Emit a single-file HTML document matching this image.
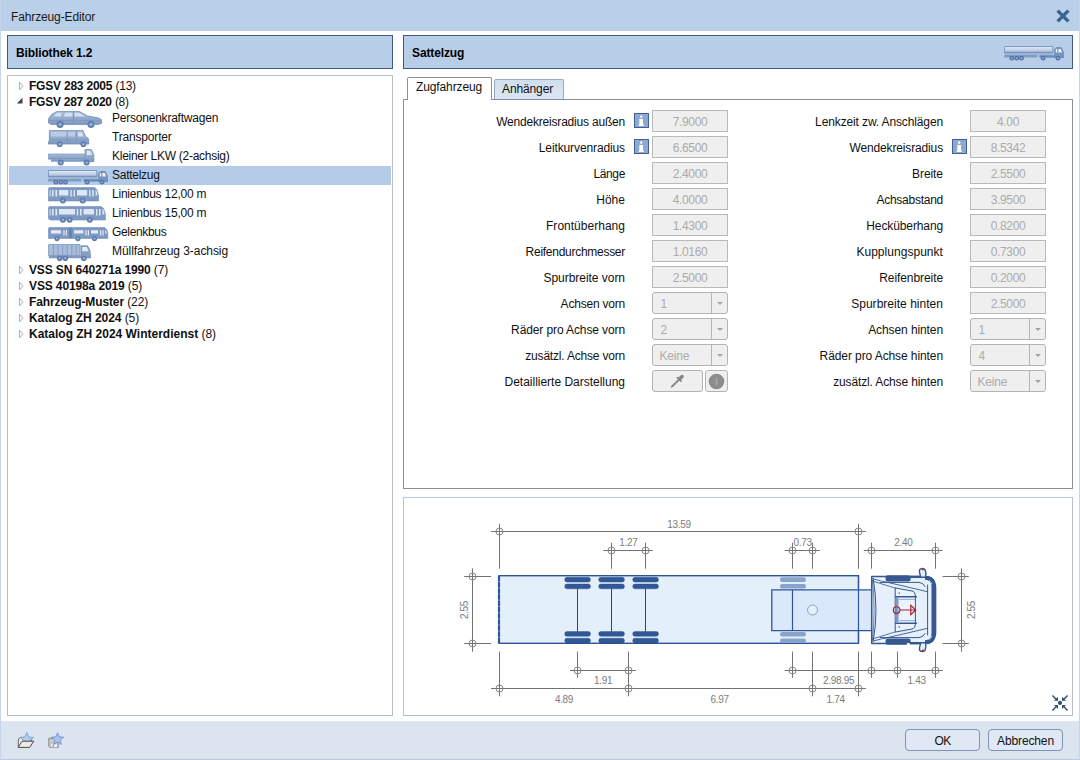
<!DOCTYPE html>
<html>
<head>
<meta charset="utf-8">
<title>Fahrzeug-Editor</title>
<style>
*{box-sizing:border-box;margin:0;padding:0}
html,body{width:1080px;height:760px;overflow:hidden;background:#fff}
body{font-family:"Liberation Sans",sans-serif;font-size:12px;color:#111;position:relative}
.abs{position:absolute}
#win{position:absolute;left:0;top:0;width:1080px;height:760px;border-left:1px solid #c6d5e9;border-right:1px solid #c6d5e9;border-bottom:1px solid #b7c9e3}
#title{position:absolute;left:0;top:0;width:1080px;height:31px;background:#bad0e9}
#title span{position:absolute;left:11px;top:9px;line-height:16px;font-size:12px;color:#1a1a1a;letter-spacing:-0.13px}
.hdr{position:absolute;top:35px;height:34px;background:#b8cee8;border:1px solid #3f5a8a}
.hdr b{position:absolute;left:8px;top:9px;line-height:16px;font-size:12px;font-weight:bold;color:#000;letter-spacing:-0.12px}
#tree{position:absolute;left:7px;top:75px;width:386px;height:641px;border:1px solid #b9bec6;border-top-color:#b4c8e6;border-bottom-color:#a9c0e2;background:#fff}
.t1{position:absolute;left:21px;height:16px;line-height:16px;white-space:nowrap;font-size:12px}
.t1 b{font-weight:bold}
.t2{position:absolute;left:104px;height:19px;line-height:19px;white-space:nowrap;font-size:12px}
#sel{position:absolute;left:1px;top:90px;width:382px;height:19px;background:#b5cce8}
#tabpanel{position:absolute;left:403px;top:99px;width:670px;height:390px;border:1px solid #8b8e96;background:#fff}
.tab{position:absolute;font-size:12px;line-height:16px;white-space:nowrap;letter-spacing:-0.12px}
#tab1{left:407px;top:77px;width:85px;height:23px;background:#fff;border:1px solid #8b8e96;border-bottom:none;border-radius:2px 2px 0 0;padding:1px 0 0 8px}
#tab2{left:494px;top:79px;width:70px;height:20px;background:linear-gradient(#d0deef,#dbe6f3);border:1px solid #9aa9c0;border-bottom:none;border-radius:2px 2px 0 0;padding:1px 0 0 7px}
.lbl{position:absolute;height:22px;line-height:25px;text-align:right;white-space:nowrap;font-size:12px;color:#111}
.fld{position:absolute;width:76px;height:22px;background:#efefef;border:1px solid #b9b9b9;text-align:center;line-height:23px;font-size:12px;color:#ababab;letter-spacing:-0.35px}
.cmb{position:absolute;width:76px;height:22px;background:#efefef;border:1px solid #b4b4b4;border-radius:3px;line-height:22px;font-size:12px;color:#ababab;padding-left:6.5px;letter-spacing:-0.2px}
.cmb i{position:absolute;left:58px;top:0;width:1px;height:20px;background:#b4b4b4}
.cmb u{position:absolute;left:64px;top:9px;width:0;height:0;border-left:3px solid transparent;border-right:3px solid transparent;border-top:3px solid #a4a4a4}
.inf{position:absolute;width:15px;height:15px;background:#8da7cf;border:1px solid #4a6ea6}
#prev{position:absolute;left:403px;top:497px;width:670px;height:219px;border:1px solid #bcc2cc;border-top-color:#b4c8ec;border-bottom-color:#a9c0e2;background:#fff}
#foot{position:absolute;left:0;top:721px;width:1080px;height:39px;background:#dbe4ef;border-bottom:1px solid #b4c8e2}
.btn{position:absolute;top:729px;height:22px;border:1px solid #7f93b2;border-radius:4px;background:#dfe8f4;text-align:center;line-height:22px;font-size:12px;color:#111;letter-spacing:-0.13px}
</style>
</head>
<body>
<div id="title"><span>Fahrzeug-Editor</span></div>
<svg class="abs" style="left:1055px;top:8px" width="16" height="16" viewBox="0 0 16 16"><path d="M2.6 2.6 L13.4 13.4 M13.4 2.6 L2.6 13.4" stroke="#3f6192" stroke-width="3.4" stroke-linecap="butt"/></svg>

<div class="hdr" style="left:7px;width:386px"><b>Bibliothek 1.2</b></div>
<div class="hdr" style="left:403px;width:670px"><b>Sattelzug</b></div>
<svg class="abs" style="left:1004px;top:45.5px" width="62" height="15" viewBox="0 0 62 15">
<defs><linearGradient id="gs1" x1="0" y1="0" x2="0" y2="1"><stop offset="0" stop-color="#e4ecf7"/><stop offset="1" stop-color="#a9bedc"/></linearGradient></defs>
<path d="M0.4 0.5H48.8V6.4H0.4Z" fill="url(#gs1)" stroke="#6b89b6" stroke-width="0.8"/>
<path d="M0.2 6.4H49.2V9H0.2Z" fill="#9cb4d6"/>
<path d="M0 6.4H49.2" stroke="#6b89b6" stroke-width="0.7"/>
<path d="M0.2 9H33.4V11.6H0.2Z" fill="#809bc4"/>
<path d="M35.4 9.2H59.6V11.6H35.4Z" fill="#6a88b6"/>
<path d="M50.6 11.4V3.2L52.4 1.6H57.2L59.2 5.6L59.6 11.4Z" fill="#7793bf" stroke="#6584b3" stroke-width="0.7"/>
<path d="M51.8 3H53.2V6.4H51.8ZM54.4 3H56.8L58 6.4H54.4Z" fill="#eef3fa"/>
<g fill="#5676a9"><circle cx="7.8" cy="12.2" r="2.4"/><circle cx="12.8" cy="12.2" r="2.4"/><circle cx="17.5" cy="12.2" r="2.4"/><circle cx="39.1" cy="12.2" r="2.4"/><circle cx="54" cy="12.2" r="2.4"/></g>
<g fill="#9db4d6"><circle cx="7.8" cy="12.2" r="0.9"/><circle cx="12.8" cy="12.2" r="0.9"/><circle cx="17.5" cy="12.2" r="0.9"/><circle cx="39.1" cy="12.2" r="0.9"/><circle cx="54" cy="12.2" r="0.9"/></g>
</svg>

<div id="tree">
<div id="sel"></div>
<svg class="abs" style="left:10.4px;top:5px" width="7" height="10" viewBox="0 0 7 10"><path d="M1.5 1.2 L5.2 5 L1.5 8.8 Z" fill="#fff" stroke="#b0b0b0" stroke-width="1"/></svg>
<div class="t1" style="top:2px;letter-spacing:-0.214px"><b>FGSV 283 2005</b> (13)</div>
<svg class="abs" style="left:8.2px;top:21.2px" width="8" height="8" viewBox="0 0 8 8"><path d="M6.5 0.8 L6.5 6.5 L0.8 6.5 Z" fill="#404040"/></svg>
<div class="t1" style="top:18px;letter-spacing:-0.251px"><b>FGSV 287 2020</b> (8)</div>

<!-- car -->
<svg class="abs" style="left:40px;top:35px" width="55" height="18" viewBox="0 0 55 18">
<defs><linearGradient id="gb" x1="0" y1="0" x2="0" y2="1"><stop offset="0" stop-color="#a9bdd9"/><stop offset="1" stop-color="#7f9ac2"/></linearGradient></defs>
<path d="M0.5 12 L0.3 8 L3.5 3.6 L8.6 0.6 L31.5 0.6 L39.6 5 L50 6.8 L53.2 8.4 L53.8 12.2 L50 13.4 L3 13.4 Z" fill="url(#gb)" stroke="#6f8cb8" stroke-width="0.8"/>
<path d="M5.5 5.2 L9 1.8 L13.6 1.8 L13 5.6 Z M15.6 5.6 L17.4 1.8 L24.6 1.8 L24.6 5.6 Z M26.6 5.6 L26.6 1.8 L31 1.8 L37.4 5.6 Z" fill="#d3e0f0"/>
<path d="M25.4 1 L25.4 13" stroke="#6f8cb8" stroke-width="0.7"/>
<path d="M1 9.4 L53 9.4" stroke="#7590bb" stroke-width="0.6"/>
<circle cx="12.1" cy="13.3" r="3.6" fill="#5f7fae"/><circle cx="12.1" cy="13.3" r="1.6" fill="#9fb5d4"/>
<circle cx="43" cy="13.3" r="3.6" fill="#5f7fae"/><circle cx="43" cy="13.3" r="1.6" fill="#9fb5d4"/>
</svg>
<div class="t2" style="top:33px;letter-spacing:-0.221px">Personenkraftwagen</div>

<!-- van -->
<svg class="abs" style="left:40px;top:54px" width="55" height="18" viewBox="0 0 55 18">
<path d="M1.4 0.6 L35 0.6 L37.6 6.6 L40.6 8.8 L40.8 14 L0.4 14 L0.4 11.6 L1.4 11 Z" fill="url(#gb)" stroke="#6f8cb8" stroke-width="0.8"/>
<path d="M3 2 L18.5 2 L18.5 6.4 L3 6.4 Z M20 2 L27 2 L27 6.4 L20 6.4 Z" fill="#b9cbe3"/>
<path d="M30 2.2 L34 2.2 L35.6 6.4 L30 6.4 Z" fill="#d6e2f1"/>
<path d="M19.2 1 L19.2 13.6 M28.4 1 L28.4 13.6 M1 9.8 L40 9.8" stroke="#7590bb" stroke-width="0.6"/>
<circle cx="11.7" cy="14.2" r="2.9" fill="#5f7fae"/><circle cx="11.7" cy="14.2" r="1.2" fill="#9fb5d4"/>
<circle cx="35.4" cy="14.2" r="2.9" fill="#5f7fae"/><circle cx="35.4" cy="14.2" r="1.2" fill="#9fb5d4"/>
</svg>
<div class="t2" style="top:52px;letter-spacing:-0.180px">Transporter</div>

<!-- small truck -->
<svg class="abs" style="left:40px;top:73px" width="55" height="18" viewBox="0 0 55 18">
<path d="M0.4 5 L36.4 5 L36.4 10.2 L0.4 10.2 Z" fill="url(#gb)" stroke="#6f8cb8" stroke-width="0.6"/>
<path d="M3 10.2 L45.6 10.2 L45.6 12.8 L3 12.8 Z" fill="#7f9ac2"/>
<path d="M37 0.6 L43.4 0.6 L45.8 6.2 L45.8 12.6 L37 12.6 Z" fill="url(#gb)" stroke="#6f8cb8" stroke-width="0.8"/>
<path d="M38.8 2 L42.6 2 L44.2 6 L38.8 6 Z" fill="#dbe6f3"/>
<circle cx="12.7" cy="13.6" r="3" fill="#5f7fae"/><circle cx="12.7" cy="13.6" r="1.2" fill="#9fb5d4"/>
<circle cx="38.6" cy="13.6" r="3" fill="#5f7fae"/><circle cx="38.6" cy="13.6" r="1.2" fill="#9fb5d4"/>
</svg>
<div class="t2" style="top:71px;letter-spacing:-0.267px">Kleiner LKW (2-achsig)</div>

<!-- semi -->
<svg class="abs" style="left:40px;top:94px" width="62" height="15" viewBox="0 0 62 15">
<defs><linearGradient id="gs2" x1="0" y1="0" x2="0" y2="1"><stop offset="0" stop-color="#e4ecf7"/><stop offset="1" stop-color="#a9bedc"/></linearGradient></defs>
<path d="M0.4 0.5H48.8V6.4H0.4Z" fill="url(#gs2)" stroke="#6b89b6" stroke-width="0.8"/>
<path d="M0.2 6.4H49.2V9H0.2Z" fill="#9cb4d6"/>
<path d="M0 6.4H49.2" stroke="#6b89b6" stroke-width="0.7"/>
<path d="M0.2 9H33.4V11.6H0.2Z" fill="#809bc4"/>
<path d="M35.4 9.2H59.6V11.6H35.4Z" fill="#6a88b6"/>
<path d="M50.6 11.4V3.2L52.4 1.6H57.2L59.2 5.6L59.6 11.4Z" fill="#7793bf" stroke="#6584b3" stroke-width="0.7"/>
<path d="M51.8 3H53.2V6.4H51.8ZM54.4 3H56.8L58 6.4H54.4Z" fill="#eef3fa"/>
<g fill="#5676a9"><circle cx="7.8" cy="12.2" r="2.4"/><circle cx="12.8" cy="12.2" r="2.4"/><circle cx="17.5" cy="12.2" r="2.4"/><circle cx="39.1" cy="12.2" r="2.4"/><circle cx="54" cy="12.2" r="2.4"/></g>
<g fill="#9db4d6"><circle cx="7.8" cy="12.2" r="0.9"/><circle cx="12.8" cy="12.2" r="0.9"/><circle cx="17.5" cy="12.2" r="0.9"/><circle cx="39.1" cy="12.2" r="0.9"/><circle cx="54" cy="12.2" r="0.9"/></g>
</svg>
<div class="t2" style="top:90px;letter-spacing:-0.261px">Sattelzug</div>

<!-- bus 12 -->
<svg class="abs" style="left:40px;top:111px" width="55" height="18" viewBox="0 0 55 18">
<path d="M1.4 0.6 L46.4 0.6 L48.6 2.2 L50.6 8 L50.6 14 L0.4 14 L0.4 1.6 Z" fill="#7f9ac2" stroke="#6f8cb8" stroke-width="0.6"/>
<path d="M1.6 3 L2.6 3 L2.6 9.6 L1.6 9.6 Z M4 3 L5.6 3 L5.6 9.6 L4 9.6 Z M7.4 3 L9.2 3 L9.2 9.6 L7.4 9.6 Z M11 3 L20.4 3 L20.4 8.4 L11 8.4 Z M22.4 3 L23.8 3 L23.8 9.6 L22.4 9.6 Z M25.6 3 L27 3 L27 9.6 L25.6 9.6 Z M29 3 L39.2 3 L39.2 8.4 L29 8.4 Z M41.2 3 L42.6 3 L42.6 9.6 L41.2 9.6 Z M44.2 3 L45.8 3 L45.8 9.6 L44.2 9.6 Z M47.6 3 L48.4 3 L49.8 8.4 L47.6 8.4 Z" fill="#dde7f4"/>
<circle cx="14.9" cy="13.6" r="3" fill="#5f7fae"/><circle cx="14.9" cy="13.6" r="1.2" fill="#9fb5d4"/>
<circle cx="34.7" cy="13.6" r="3" fill="#5f7fae"/><circle cx="34.7" cy="13.6" r="1.2" fill="#9fb5d4"/>
</svg>
<div class="t2" style="top:109px;letter-spacing:-0.222px">Linienbus 12,00 m</div>

<!-- bus 15 -->
<svg class="abs" style="left:40px;top:130px" width="60" height="18" viewBox="0 0 60 18">
<path d="M1.4 0.6 L53 0.6 L55.4 2.2 L57.4 8 L57.4 14 L2 14 L0.4 12.6 L0.4 1.6 Z" fill="#7f9ac2" stroke="#6f8cb8" stroke-width="0.6"/>
<path d="M1.6 3 L2.6 3 L2.6 9.6 L1.6 9.6 Z M4 3 L5.6 3 L5.6 9.6 L4 9.6 Z M7.4 3 L9.2 3 L9.2 9.6 L7.4 9.6 Z M11 3 L27 3 L27 8.4 L11 8.4 Z M28.8 3 L30.2 3 L30.2 9.6 L28.8 9.6 Z M32 3 L33.6 3 L33.6 9.6 L32 9.6 Z M35.6 3 L46 3 L46 8.4 L35.6 8.4 Z M48 3 L49.4 3 L49.4 9.6 L48 9.6 Z M51 3 L52.6 3 L52.6 9.6 L51 9.6 Z M54.4 3 L55.2 3 L56.6 8.4 L54.4 8.4 Z" fill="#dde7f4"/>
<circle cx="14.9" cy="13.8" r="3" fill="#5f7fae"/><circle cx="14.9" cy="13.8" r="1.2" fill="#9fb5d4"/>
<circle cx="21.6" cy="13.8" r="3" fill="#5f7fae"/><circle cx="21.6" cy="13.8" r="1.2" fill="#9fb5d4"/>
<circle cx="41.8" cy="13.8" r="3" fill="#5f7fae"/><circle cx="41.8" cy="13.8" r="1.2" fill="#9fb5d4"/>
</svg>
<div class="t2" style="top:128px;letter-spacing:-0.222px">Linienbus 15,00 m</div>

<!-- gelenkbus -->
<svg class="abs" style="left:40px;top:151px" width="62" height="15" viewBox="0 0 62 15">
<path d="M1.2 0.5 L56.6 0.5 L58.4 2 L59.8 6 L59.8 11.4 L0.4 11.4 L0.4 1.4 Z" fill="#7f9ac2" stroke="#6f8cb8" stroke-width="0.6"/>
<path d="M3 3.2 L13 3.2 L13 6.4 L3 6.4 Z M15.4 3.2 L16.6 3.2 L16.6 8.6 L15.4 8.6 Z M17.8 3.2 L19 3.2 L19 8.6 L17.8 8.6 Z M26 3.2 L35.4 3.2 L35.4 6.4 L26 6.4 Z M37.4 3.2 L38.6 3.2 L38.6 8.6 L37.4 8.6 Z M39.8 3.2 L41 3.2 L41 8.6 L39.8 8.6 Z M43 3.2 L50 3.2 L50 6.4 L43 6.4 Z M52 3.2 L53.2 3.2 L53.2 8.6 L52 8.6 Z M54.4 3.2 L55.6 3.2 L55.6 8.6 L54.4 8.6 Z M57.2 3.2 L57.8 3.2 L58.8 6.4 L57.2 6.4 Z" fill="#e2ebf6"/>
<path d="M21 0.8 L24 0.8 L24 11.2 L21 11.2 Z" fill="#6685b3"/>
<circle cx="9" cy="11.6" r="2.6" fill="#5f7fae"/><circle cx="9" cy="11.6" r="1" fill="#9fb5d4"/>
<circle cx="29.9" cy="11.6" r="2.6" fill="#5f7fae"/><circle cx="29.9" cy="11.6" r="1" fill="#9fb5d4"/>
<circle cx="46.5" cy="11.6" r="2.6" fill="#5f7fae"/><circle cx="46.5" cy="11.6" r="1" fill="#9fb5d4"/>
</svg>
<div class="t2" style="top:147px;letter-spacing:-0.342px">Gelenkbus</div>

<!-- garbage truck -->
<svg class="abs" style="left:40px;top:168px" width="55" height="18" viewBox="0 0 55 18">
<path d="M0.6 0.5 L32 0.5 L32 11.6 L0.6 11.6 Z" fill="#a9bedb" stroke="#6f8cb8" stroke-width="0.7"/>
<path d="M5.4 0.8 L5.4 11.4 M10 0.8 L10 11.4 M14.6 0.8 L14.6 11.4 M19.2 0.8 L19.2 11.4 M23.8 0.8 L23.8 11.4 M28.2 0.8 L28.2 11.4" stroke="#7f9ac2" stroke-width="0.9"/>
<path d="M0.8 11.6 L42.4 11.6 L42.4 14.2 L0.8 14.2 Z" fill="#7f9ac2"/>
<path d="M33 1.8 L39.6 1.8 L42 6.6 L42.6 13.6 L33 13.6 Z" fill="#86a0c6" stroke="#6f8cb8" stroke-width="0.7"/>
<path d="M34.2 3 L38.8 3 L40.6 7.2 L34.2 7.2 Z" fill="#e2ebf6"/>
<circle cx="11.7" cy="14.2" r="2.8" fill="#5f7fae"/><circle cx="11.7" cy="14.2" r="1.1" fill="#9fb5d4"/>
<circle cx="17.3" cy="14.2" r="2.8" fill="#5f7fae"/><circle cx="17.3" cy="14.2" r="1.1" fill="#9fb5d4"/>
<circle cx="35.8" cy="14.2" r="2.8" fill="#5f7fae"/><circle cx="35.8" cy="14.2" r="1.1" fill="#9fb5d4"/>
</svg>
<div class="t2" style="top:166px;letter-spacing:-0.062px">Müllfahrzeug 3-achsig</div>

<svg class="abs" style="left:10.4px;top:189px" width="7" height="10" viewBox="0 0 7 10"><path d="M1.5 1.2 L5.2 5 L1.5 8.8 Z" fill="#fff" stroke="#b0b0b0" stroke-width="1"/></svg>
<div class="t1" style="top:186px;letter-spacing:-0.131px"><b>VSS SN 640271a 1990</b> (7)</div>
<svg class="abs" style="left:10.4px;top:205px" width="7" height="10" viewBox="0 0 7 10"><path d="M1.5 1.2 L5.2 5 L1.5 8.8 Z" fill="#fff" stroke="#b0b0b0" stroke-width="1"/></svg>
<div class="t1" style="top:202px;letter-spacing:-0.122px"><b>VSS 40198a 2019</b> (5)</div>
<svg class="abs" style="left:10.4px;top:221px" width="7" height="10" viewBox="0 0 7 10"><path d="M1.5 1.2 L5.2 5 L1.5 8.8 Z" fill="#fff" stroke="#b0b0b0" stroke-width="1"/></svg>
<div class="t1" style="top:218px;letter-spacing:-0.114px"><b>Fahrzeug-Muster</b> (22)</div>
<svg class="abs" style="left:10.4px;top:237px" width="7" height="10" viewBox="0 0 7 10"><path d="M1.5 1.2 L5.2 5 L1.5 8.8 Z" fill="#fff" stroke="#b0b0b0" stroke-width="1"/></svg>
<div class="t1" style="top:234px;letter-spacing:-0.067px"><b>Katalog ZH 2024</b> (5)</div>
<svg class="abs" style="left:10.4px;top:253px" width="7" height="10" viewBox="0 0 7 10"><path d="M1.5 1.2 L5.2 5 L1.5 8.8 Z" fill="#fff" stroke="#b0b0b0" stroke-width="1"/></svg>
<div class="t1" style="top:250px;letter-spacing:-0.005px"><b>Katalog ZH 2024 Winterdienst</b> (8)</div>
</div>

<div id="tabpanel"></div>
<div class="tab" id="tab2">Anhänger</div>
<div class="tab" id="tab1">Zugfahrzeug</div>

<div id="form">
<div class="lbl" style="right:455px;top:110px;letter-spacing:-0.199px">Wendekreisradius außen</div>
<svg class="abs" style="left:634px;top:113px" width="15" height="15" viewBox="0 0 15 15"><rect x="0.5" y="0.5" width="14" height="14" fill="#8fa8d0" stroke="#40609a"/><path d="M7.2 1.9L8.7 3.6L7.2 5.3L5.7 3.6Z M5.3 6.1h3.7v5.3h0.9v1.5h-5.1v-1.5h0.5z" fill="#fff"/></svg>
<div class="fld" style="left:652px;top:110px">7.9000</div>
<div class="lbl" style="right:455px;top:136px;letter-spacing:-0.116px">Leitkurvenradius</div>
<svg class="abs" style="left:634px;top:139px" width="15" height="15" viewBox="0 0 15 15"><rect x="0.5" y="0.5" width="14" height="14" fill="#8fa8d0" stroke="#40609a"/><path d="M7.2 1.9L8.7 3.6L7.2 5.3L5.7 3.6Z M5.3 6.1h3.7v5.3h0.9v1.5h-5.1v-1.5h0.5z" fill="#fff"/></svg>
<div class="fld" style="left:652px;top:136px">6.6500</div>
<div class="lbl" style="right:455px;top:162px;letter-spacing:-0.355px">Länge</div>
<div class="fld" style="left:652px;top:162px">2.4000</div>
<div class="lbl" style="right:455px;top:188px;letter-spacing:0.028px">Höhe</div>
<div class="fld" style="left:652px;top:188px">4.0000</div>
<div class="lbl" style="right:455px;top:214px;letter-spacing:0.02px">Frontüberhang</div>
<div class="fld" style="left:652px;top:214px">1.4300</div>
<div class="lbl" style="right:455px;top:240px;letter-spacing:-0.273px">Reifendurchmesser</div>
<div class="fld" style="left:652px;top:240px">1.0160</div>
<div class="lbl" style="right:455px;top:266px;letter-spacing:-0.036px">Spurbreite vorn</div>
<div class="fld" style="left:652px;top:266px">2.5000</div>
<div class="lbl" style="right:455px;top:292px;letter-spacing:-0.209px">Achsen vorn</div>
<div class="cmb" style="left:652px;top:292px;padding-left:7.5px">1<i></i><u></u></div>
<div class="lbl" style="right:455px;top:318px;letter-spacing:-0.108px">Räder pro Achse vorn</div>
<div class="cmb" style="left:652px;top:318px;padding-left:7.5px">2<i></i><u></u></div>
<div class="lbl" style="right:455px;top:344px;letter-spacing:-0.194px">zusätzl. Achse vorn</div>
<div class="cmb" style="left:652px;top:344px">Keine<i></i><u></u></div>
<div class="lbl" style="right:455px;top:370px;letter-spacing:-0.01px">Detaillierte Darstellung</div>
<div class="cmb" style="left:652px;top:370px;width:51px;padding:0"><svg class="abs" style="left:16px;top:2px" width="17" height="17" viewBox="0 0 17 17"><path d="M1.6 15L2.6 12.6L9.4 5.8L10.8 7.2L4 14Z" fill="#8a8a8a"/><path d="M8.4 4.6L12 8.2" stroke="#858585" stroke-width="1.7" stroke-linecap="round"/><path d="M11 5.6L13 3.6" stroke="#858585" stroke-width="3.6" stroke-linecap="round"/></svg></div>
<div class="cmb" style="left:705px;top:370px;width:23px;padding:0"><svg class="abs" style="left:2px;top:2px" width="17" height="17" viewBox="0 0 17 17"><circle cx="8.5" cy="8.5" r="7.8" fill="#8c8c8c"/><path d="M8.5 5.4 V11.6" stroke="#a8a8a8" stroke-width="1.6" stroke-linecap="round"/></svg></div>
<div class="lbl" style="right:137px;top:110px;letter-spacing:-0.125px">Lenkzeit zw. Anschlägen</div>
<div class="fld" style="left:970px;top:110px">4.00</div>
<div class="lbl" style="right:137px;top:136px;letter-spacing:-0.146px">Wendekreisradius</div>
<svg class="abs" style="left:952px;top:139px" width="15" height="15" viewBox="0 0 15 15"><rect x="0.5" y="0.5" width="14" height="14" fill="#8fa8d0" stroke="#40609a"/><path d="M7.2 1.9L8.7 3.6L7.2 5.3L5.7 3.6Z M5.3 6.1h3.7v5.3h0.9v1.5h-5.1v-1.5h0.5z" fill="#fff"/></svg>
<div class="fld" style="left:970px;top:136px">8.5342</div>
<div class="lbl" style="right:137px;top:162px;letter-spacing:-0.06px">Breite</div>
<div class="fld" style="left:970px;top:162px">2.5500</div>
<div class="lbl" style="right:137px;top:188px;letter-spacing:-0.254px">Achsabstand</div>
<div class="fld" style="left:970px;top:188px">3.9500</div>
<div class="lbl" style="right:137px;top:214px;letter-spacing:-0.114px">Hecküberhang</div>
<div class="fld" style="left:970px;top:214px">0.8200</div>
<div class="lbl" style="right:137px;top:240px;letter-spacing:0.037px">Kupplungspunkt</div>
<div class="fld" style="left:970px;top:240px">0.7300</div>
<div class="lbl" style="right:137px;top:266px;letter-spacing:-0.077px">Reifenbreite</div>
<div class="fld" style="left:970px;top:266px">0.2000</div>
<div class="lbl" style="right:137px;top:292px;letter-spacing:0.023px">Spurbreite hinten</div>
<div class="fld" style="left:970px;top:292px">2.5000</div>
<div class="lbl" style="right:137px;top:318px;letter-spacing:-0.097px">Achsen hinten</div>
<div class="cmb" style="left:970px;top:318px;padding-left:7.5px">1<i></i><u></u></div>
<div class="lbl" style="right:137px;top:344px;letter-spacing:-0.092px">Räder pro Achse hinten</div>
<div class="cmb" style="left:970px;top:344px;padding-left:7.5px">4<i></i><u></u></div>
<div class="lbl" style="right:137px;top:370px;letter-spacing:-0.14px">zusätzl. Achse hinten</div>
<div class="cmb" style="left:970px;top:370px">Keine<i></i><u></u></div>
</div>

<div id="prev"></div>
<svg class="abs" style="left:404px;top:498px" width="669" height="217" viewBox="404 498 669 217">
<rect x="499" y="575.7" width="359.5" height="67.6" fill="#e4effc" stroke="#2f5597" stroke-width="1.4"/>
<path d="M499 576V643" stroke="#2f5597" stroke-width="2.2" stroke-dasharray="5 1.2"/>
<path d="M771.8 589.8H872V630.6H771.8Z" fill="#d9e8fa" stroke="#2f5597" stroke-width="1.3"/>
<path d="M858.5 575.7V643.3M792.5 589.8V630.6" stroke="#2f5597" stroke-width="1.2"/>
<circle cx="812.5" cy="610" r="5" fill="#e6f0fc" stroke="#8ba2c8" stroke-width="1"/>
<rect x="564.7" y="577.3" width="25.8" height="4.8" rx="2.3" fill="#2f5896" stroke="#2a4c88" stroke-width="0.4"/>
<rect x="564.7" y="584.0" width="25.8" height="4.8" rx="2.3" fill="#2f5896" stroke="#2a4c88" stroke-width="0.4"/>
<rect x="564.7" y="631.5" width="25.8" height="4.8" rx="2.3" fill="#2f5896" stroke="#2a4c88" stroke-width="0.4"/>
<rect x="564.7" y="638.3" width="25.8" height="4.8" rx="2.3" fill="#2f5896" stroke="#2a4c88" stroke-width="0.4"/>
<path d="M577.5 588.6V631.5" stroke="#2d4676" stroke-width="1"/>
<rect x="598.7" y="577.3" width="25.8" height="4.8" rx="2.3" fill="#2f5896" stroke="#2a4c88" stroke-width="0.4"/>
<rect x="598.7" y="584.0" width="25.8" height="4.8" rx="2.3" fill="#2f5896" stroke="#2a4c88" stroke-width="0.4"/>
<rect x="598.7" y="631.5" width="25.8" height="4.8" rx="2.3" fill="#2f5896" stroke="#2a4c88" stroke-width="0.4"/>
<rect x="598.7" y="638.3" width="25.8" height="4.8" rx="2.3" fill="#2f5896" stroke="#2a4c88" stroke-width="0.4"/>
<path d="M611.5 588.6V631.5" stroke="#2d4676" stroke-width="1"/>
<rect x="632.7" y="577.3" width="25.8" height="4.8" rx="2.3" fill="#2f5896" stroke="#2a4c88" stroke-width="0.4"/>
<rect x="632.7" y="584.0" width="25.8" height="4.8" rx="2.3" fill="#2f5896" stroke="#2a4c88" stroke-width="0.4"/>
<rect x="632.7" y="631.5" width="25.8" height="4.8" rx="2.3" fill="#2f5896" stroke="#2a4c88" stroke-width="0.4"/>
<rect x="632.7" y="638.3" width="25.8" height="4.8" rx="2.3" fill="#2f5896" stroke="#2a4c88" stroke-width="0.4"/>
<path d="M645.5 588.6V631.5" stroke="#2d4676" stroke-width="1"/>
<rect x="780" y="577.3" width="26" height="4.6" rx="2.2" fill="#89a3cb"/>
<rect x="780" y="584.0" width="26" height="4.6" rx="2.2" fill="#89a3cb"/>
<rect x="780" y="631.9" width="26" height="4.6" rx="2.2" fill="#89a3cb"/>
<rect x="780" y="638.4" width="26" height="4.6" rx="2.2" fill="#89a3cb"/>
<g stroke="#34588f" fill="none" stroke-linejoin="round" stroke-linecap="round">
<path d="M871.7 576.4H925Q935.4 576.6 935.6 588V632Q935.4 643.4 925 643.6H871.7Z" fill="#e6f0fc" stroke-width="1.5"/>
<path d="M873.2 578.4Q878.8 610 873.2 641.6" stroke-width="1"/>
<path d="M872.6 580.4Q875.6 610 872.6 639.6" stroke-width="0.7"/>
<path d="M873 579L905 586.4L927 591.6M873 641L905 633.6L927 628.4" stroke-width="0.9"/>
<path d="M873 581.2L895.6 588.2M873 638.8L895.6 631.8" stroke-width="0.8"/>
<path d="M880 582.4H919Q923.4 582.8 925 586.4M880 637.6H919Q923.4 637.2 925 633.6" stroke-width="1"/>
<path d="M927.6 585V635" stroke-width="1"/>
<path d="M925 577.8Q933.4 578 933.5 586.6V633.4Q933.4 642 925 642.2" stroke-width="4" stroke-linecap="butt"/>
<path d="M910 576.9H926M910 643.1H926" stroke-width="2.2" stroke-linecap="butt"/>
<path d="M929.4 580.6L931.8 583.6M929.4 639.4L931.8 636.4" stroke="#c7d6ec" stroke-width="1"/>
<path d="M895.6 588L913 591.2Q915.4 592.4 915.4 596V624Q915.4 627.6 913 628.8L895.6 632Z" fill="#eaf2fd" stroke-width="1"/>
<path d="M895.6 596.8H916.4M895.6 623.2H916.4" stroke-width="1.5"/>
<path d="M897.1 597.4V622.6" stroke-width="2.8" stroke="#7e98c3" stroke-linecap="butt"/>
<path d="M899.6 599.4H914.6M899.6 620.6H914.6" stroke-width="0.8" stroke="#7e98c3"/>
<path d="M920.6 576.4Q919 571.6 919.6 569.8Q921.8 567.2 925 569.6Q926.4 572.6 925.6 576.6" stroke-width="1.4" fill="#e6f0fc"/>
<path d="M920.6 643.6Q919 648.4 919.6 650.2Q921.8 652.8 925 650.4Q926.4 647.4 925.6 643.4" stroke-width="1.4" fill="#e6f0fc"/>
</g>
<rect x="885.6" y="575.3" width="25" height="6.2" rx="2.2" fill="#34588f"/>
<rect x="885.6" y="638.5" width="25" height="6.2" rx="2.2" fill="#34588f"/>
<path d="M880.6 578H884.2V580.6H880.6ZM880.6 639.4H884.2V642H880.6Z" fill="#f4f8fd"/>
<rect x="898.6" y="592.4" width="1.3" height="1.3" fill="#34588f"/><rect x="898.6" y="626.4" width="1.3" height="1.3" fill="#34588f"/>
<circle cx="908.4" cy="644.2" r="1.5" fill="#fff"/>
<circle cx="922.9" cy="569.3" r="1.1" fill="#c0282d"/><circle cx="922.9" cy="650.7" r="1.1" fill="#c0282d"/>
<g stroke="#a8222a" fill="none" stroke-width="1.15"><circle cx="896.6" cy="610" r="3.3"/><path d="M899.9 610H915.6M910.8 605.4V614.6L915.8 610Z"/></g>
<g stroke="#727272" stroke-width="1" fill="none">
<path d="M491 531.5L865.8 531.5"/>
<path d="M499.5 523.8L499.5 568.7"/>
<path d="M858.5 523.8L858.5 568.7"/>
<path d="M603.3 550.5L652.8 550.5"/>
<path d="M611.5 542.7L611.5 568.7"/>
<path d="M645.5 542.7L645.5 568.7"/>
<path d="M784.6 550.5L819.8 550.5"/>
<path d="M792.5 542.7L792.5 568.7"/>
<path d="M812.5 542.7L812.5 568.7"/>
<path d="M863.8 550.5L942.6 550.5"/>
<path d="M871.5 542.7L871.5 568.7"/>
<path d="M935.5 542.7L935.5 568.7"/>
<path d="M472.5 568.4L472.5 651.7"/>
<path d="M464.2 576.5L491 576.5"/>
<path d="M464.2 643.5L491 643.5"/>
<path d="M961.5 568.4L961.5 651.7"/>
<path d="M942.5 576.5L968.8 576.5"/>
<path d="M942.5 643.5L968.8 643.5"/>
<path d="M570 670.5L635.8 670.5"/>
<path d="M784.6 670.5L942.8 670.5"/>
<path d="M577.5 651.6L577.5 677.8"/>
<path d="M792.5 651.6L792.5 677.8"/>
<path d="M871.5 651.6L871.5 677.8"/>
<path d="M897.5 651.6L897.5 677.8"/>
<path d="M935.5 651.6L935.5 677.8"/>
<path d="M491 688.5L865.8 688.5"/>
<path d="M499.5 651.6L499.5 696.3"/>
<path d="M628.5 651.6L628.5 696.3"/>
<path d="M812.5 651.6L812.5 696.3"/>
<path d="M858.5 651.6L858.5 696.3"/>
</g>
<g stroke="#858585" stroke-width="1" fill="none">
<circle cx="499.5" cy="531.5" r="3.5"/>
<circle cx="858.5" cy="531.5" r="3.5"/>
<circle cx="611.5" cy="550.5" r="3.5"/>
<circle cx="645.5" cy="550.5" r="3.5"/>
<circle cx="792.5" cy="550.5" r="3.5"/>
<circle cx="812.5" cy="550.5" r="3.5"/>
<circle cx="871.5" cy="550.5" r="3.5"/>
<circle cx="935.5" cy="550.5" r="3.5"/>
<circle cx="472.5" cy="576.5" r="3.5"/>
<circle cx="472.5" cy="643.5" r="3.5"/>
<circle cx="961.5" cy="576.5" r="3.5"/>
<circle cx="961.5" cy="643.5" r="3.5"/>
<circle cx="577.5" cy="670.5" r="3.5"/>
<circle cx="628.5" cy="670.5" r="3.5"/>
<circle cx="792.5" cy="670.5" r="3.5"/>
<circle cx="871.5" cy="670.5" r="3.5"/>
<circle cx="897.5" cy="670.5" r="3.5"/>
<circle cx="935.5" cy="670.5" r="3.5"/>
<circle cx="499.5" cy="688.5" r="3.5"/>
<circle cx="628.5" cy="688.5" r="3.5"/>
<circle cx="812.5" cy="688.5" r="3.5"/>
<circle cx="858.5" cy="688.5" r="3.5"/>
</g>
<g font-family="Liberation Sans, sans-serif" font-size="10" fill="#7c7c7c" letter-spacing="-0.33">
<text x="679" y="528.1" text-anchor="middle">13.59</text>
<text x="628.4" y="546.0" text-anchor="middle">1.27</text>
<text x="802.7" y="546.0" text-anchor="middle">0.73</text>
<text x="903.3" y="546.0" text-anchor="middle">2.40</text>
<text x="603.2" y="684.4" text-anchor="middle">1.91</text>
<text x="838.6" y="684.4" text-anchor="middle">2.98.95</text>
<text x="916.6" y="684.4" text-anchor="middle">1.43</text>
<text x="564" y="703.4" text-anchor="middle">4.89</text>
<text x="719.7" y="703.4" text-anchor="middle">6.97</text>
<text x="835.7" y="703.4" text-anchor="middle">1.74</text>
<text transform="translate(468.4 610) rotate(-90)" text-anchor="middle">2.55</text>
<text transform="translate(974.5 610) rotate(-90)" text-anchor="middle">2.55</text>
</g>
<g stroke="#30507a" stroke-width="1.4" fill="none">
<path d="M1052.4 695.4L1057 700M1067.6 695.4L1063 700M1052.4 710.4L1057 705.8M1067.6 710.4L1063 705.8"/>
</g><g fill="#30507a"><path d="M1058 696.8V700.8H1054ZM1062 696.8V700.8H1066ZM1058 709V705H1054ZM1062 709V705H1066Z"/><circle cx="1060" cy="702.9" r="2.1"/></g>
</svg>

<div id="foot"></div>
<!--footicons--><svg class="abs" style="left:14px;top:729px" width="56" height="22" viewBox="14 729 56 22">
<path d="M18.3 747.3V739.8L19.8 737.6H24L25 739.2H31.4V741.2" fill="#f2f0ec" stroke="#555" stroke-width="0.9" stroke-linejoin="round"/>
<path d="M26.90 732.40L28.78 737.01L33.75 737.38L29.94 740.59L31.13 745.42L26.90 742.80L22.67 745.42L23.86 740.59L20.05 737.38L25.02 737.01Z" fill="#b3cbee" stroke="#7ea2da" stroke-width="0.9" stroke-linejoin="round"/>
<path d="M18.2 747.4L22 741.2H33.8L29.6 747.4Z" fill="#eeebe6" stroke="#4c4c4c" stroke-width="1" stroke-linejoin="round"/>
<path d="M48.8 738.2H58.2V747.4H49.8L48.8 746.4Z" fill="#c9c9c9" stroke="#8a8a8a" stroke-width="1"/>
<path d="M51 744.4H57V747.2H51Z" fill="#f6f6f6"/><path d="M52.4 745H53.8V746.8H52.4Z" fill="#8a8a8a"/>
<path d="M57.60 732.80L59.30 736.85L63.69 737.22L60.36 740.10L61.36 744.38L57.60 742.10L53.84 744.38L54.84 740.10L51.51 737.22L55.90 736.85Z" fill="#adc2ea" stroke="#6f92d3" stroke-width="0.9" stroke-linejoin="round"/>
</svg>
<div class="btn" style="left:905px;width:75px;letter-spacing:-0.6px">OK</div>
<div class="btn" style="left:988px;width:75px">Abbrechen</div>
<div id="win" style="pointer-events:none;background:none"></div>
</body>
</html>
